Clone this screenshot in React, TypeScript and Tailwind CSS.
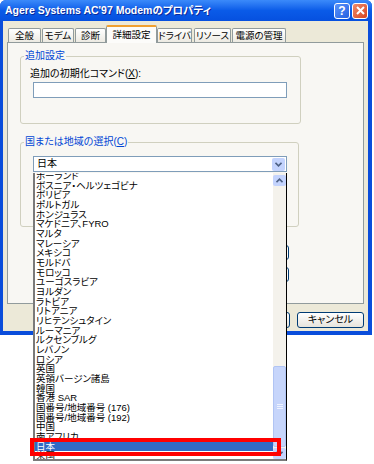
const countries = [
  "ポーランド",
  "ボスニア・ヘルツェゴビナ",
  "ボリビア",
  "ポルトガル",
  "ホンジュラス",
  "マケドニア、FYRO",
  "マルタ",
  "マレーシア",
  "メキシコ",
  "モルドバ",
  "モロッコ",
  "ユーゴスラビア",
  "ヨルダン",
  "ラトビア",
  "リトアニア",
  "リヒテンシュタイン",
  "ルーマニア",
  "ルクセンブルグ",
  "レバノン",
  "ロシア",
  "英国",
  "英領バージン諸島",
  "韓国",
  "香港 SAR",
  "国番号/地域番号 (176)",
  "国番号/地域番号 (192)",
  "中国",
  "南アフリカ",
  "日本",
  "米国",
];

const tabs = [
  { label: "全般", w: "w-[33px] ml-[1px]" },
  { label: "モデム", w: "w-[32px] ml-[1px]" },
  { label: "診断", w: "w-[31px] ml-[1px]" },
  { label: "詳細設定", w: "w-[51px]", active: true },
  { label: "ドライバ", w: "w-[35px]" },
  { label: "リソース", w: "w-[37px] ml-[2px]" },
  { label: "電源の管理", w: "w-[54px] ml-[1px]" },
];

function Chevron({ up }: { up?: boolean }) {
  return (
    <svg width="7" height="5" viewBox="0 0 7 5">
      <path
        d={up ? "M0.5 4.2 L3.5 1.2 L6.5 4.2" : "M0.5 0.8 L3.5 3.8 L6.5 0.8"}
        fill="none"
        stroke="#4d6185"
        strokeWidth="1.6"
      />
    </svg>
  );
}

export default function App() {
  return (
    <div className="relative w-[374px] h-[464px] bg-white overflow-hidden font-['Liberation_Sans','Noto_Sans_CJK_JP',sans-serif] [font-feature-settings:'palt'] text-black">
      {/* dialog window */}
      <div className="w-[372px] h-[335px] flex flex-col rounded-t-[6px] bg-[#0a4ddb]">
        <div className="h-[21px] flex items-center pl-[5px] pr-[4px] rounded-t-[6px] bg-gradient-to-b from-[#3b8afa] via-[#0a5be8] to-[#0650df]">
          <span className="text-[10.5px] font-bold text-white [text-shadow:1px_1px_#0b2a9a] leading-none whitespace-nowrap">
            Agere Systems AC'97 Modemのプロパティ
          </span>
          <div className="ml-auto flex items-center gap-[2px]">
            <div className="w-[16px] h-[16px] rounded-[3px] border border-white bg-gradient-to-br from-[#5b93fb] to-[#2460e0] flex items-center justify-center text-white text-[12px] font-bold leading-none">
              ?
            </div>
            <div className="w-[16px] h-[16px] rounded-[3px] border border-white bg-gradient-to-br from-[#ee8a6a] to-[#d6421c] flex items-center justify-center">
              <svg width="9" height="9" viewBox="0 0 9 9">
                <path d="M1 1 L8 8 M8 1 L1 8" stroke="white" strokeWidth="2" />
              </svg>
            </div>
          </div>
        </div>

        <div className="flex-1 ml-[3px] mr-[4px] mb-[4px] bg-[#ece9d8] flex flex-col px-[4px] pt-[4px] text-[10px]">
          {/* tabs */}
          <div className="h-[17px] flex items-end relative z-10 text-[9.5px]">
            {tabs.map((t) =>
              t.active ? (
                <div
                  key={t.label}
                  className={`${t.w} h-[18px] -mb-[1px] rounded-t-[2px] border border-[#919b9c] border-b-0 border-t-[2px] border-t-[#f0a030] bg-[#fcfcfa] flex items-center justify-center leading-none whitespace-nowrap`}
                >
                  {t.label}
                </div>
              ) : (
                <div
                  key={t.label}
                  className={`${t.w} h-[14px] rounded-t-[2px] border border-[#919b9c] border-b-0 bg-gradient-to-b from-white to-[#eceae2] flex items-center justify-center leading-none whitespace-nowrap`}
                >
                  {t.label}
                </div>
              ),
            )}
          </div>

          {/* panel */}
          <div className="h-[262px] border border-[#919b9c] bg-[#f8f7f3] flex flex-col pl-[12px]">
            <fieldset className="mt-[7px] w-[281px] h-[74px] border border-[#d0d0bf] rounded-[3px]">
              <legend className="ml-[3px] px-[1px] text-[#0046d5] leading-[12px]">追加設定</legend>
              <div className="mt-[6px] ml-[9px] leading-[12px]">
                追加の初期化コマンド(<span className="underline">X</span>):
              </div>
              <div className="mt-[2px] ml-[12px] w-[254px] h-[16px] border border-[#7f9db9] bg-white" />
            </fieldset>

            <fieldset className="mt-[12px] w-[279px] h-[91px] border border-[#d0d0bf] rounded-[3px]">
              <legend className="ml-[3px] px-[1px] text-[#0046d5] leading-[12px]">
                国または地域の選択(<span className="underline">C</span>)
              </legend>
              <div className="mt-[8px] ml-[12px] w-[254px] h-[16px] border border-[#7f9db9] bg-white flex items-center pl-[3px]">
                <span className="leading-none">日本</span>
                <div className="ml-auto mr-[1px] w-[13px] h-[13px] rounded-[2px] bg-[#c3d3fd] flex items-center justify-center">
                  <Chevron />
                </div>
              </div>
            </fieldset>

            <div className="w-[269px] mt-[18px] flex flex-col items-end gap-[7px]">
              <div className="w-[110px] h-[15px] rounded-[3px] border border-[#003c74] bg-white" />
              <div className="w-[110px] h-[15px] rounded-[3px] border border-[#003c74] bg-white" />
            </div>
          </div>

          {/* dialog buttons */}
          <div className="mt-[8px] flex justify-end gap-[7px]">
            <div className="w-[67px] h-[16px] rounded-[3px] border border-[#003c74] bg-gradient-to-b from-white to-[#e6e4dc] flex items-center justify-center leading-none">
              OK
            </div>
            <div className="w-[67px] h-[16px] rounded-[3px] border border-[#003c74] bg-gradient-to-b from-white to-[#e6e4dc] flex items-center justify-center leading-none">
              キャンセル
            </div>
          </div>
        </div>
      </div>

      {/* open dropdown list */}
      <div className="absolute left-[33px] top-[173px] w-[254px] h-[288px] bg-white border-l-[2px] border-l-[#7a7a7a] border-r border-r-black border-b-[2px] border-b-[#7a7a7a] flex">
        <div className="flex-1 overflow-hidden">
          <div className="-mt-[2px]">
            {countries.map((c) => (
              <div
                key={c}
                className={`h-[9.68px] leading-[9.68px] text-[9.5px] whitespace-nowrap pl-[1px] ${
                  c === "日本" ? "bg-[#316ac5] text-white" : ""
                }`}
              >
                {c}
              </div>
            ))}
          </div>
        </div>
        <div className="w-[13px] bg-[#f4f2ec] flex flex-col">
          <div className="mt-[2px] h-[11px] rounded-[2px] bg-[#c3d3fd] flex items-center justify-center">
            <Chevron up />
          </div>
          <div className="flex-1" />
          <div className="h-[81px] rounded-[2px] bg-[#c6d5fb] border border-[#b0c4f4] flex flex-col items-center justify-center gap-[1px]">
            <div className="w-[6px] h-px bg-[#eef3ff]" />
            <div className="w-[6px] h-px bg-[#eef3ff]" />
            <div className="w-[6px] h-px bg-[#eef3ff]" />
          </div>
          <div className="mt-[1px] h-[11px] rounded-[2px] bg-[#c3d3fd] flex items-center justify-center">
            <Chevron />
          </div>
        </div>
      </div>

      {/* red highlight frame */}
      <div className="absolute left-[30px] top-[438px] w-[251px] h-[18px] border-[4px] border-[#ff0000]" />
    </div>
  );
}
